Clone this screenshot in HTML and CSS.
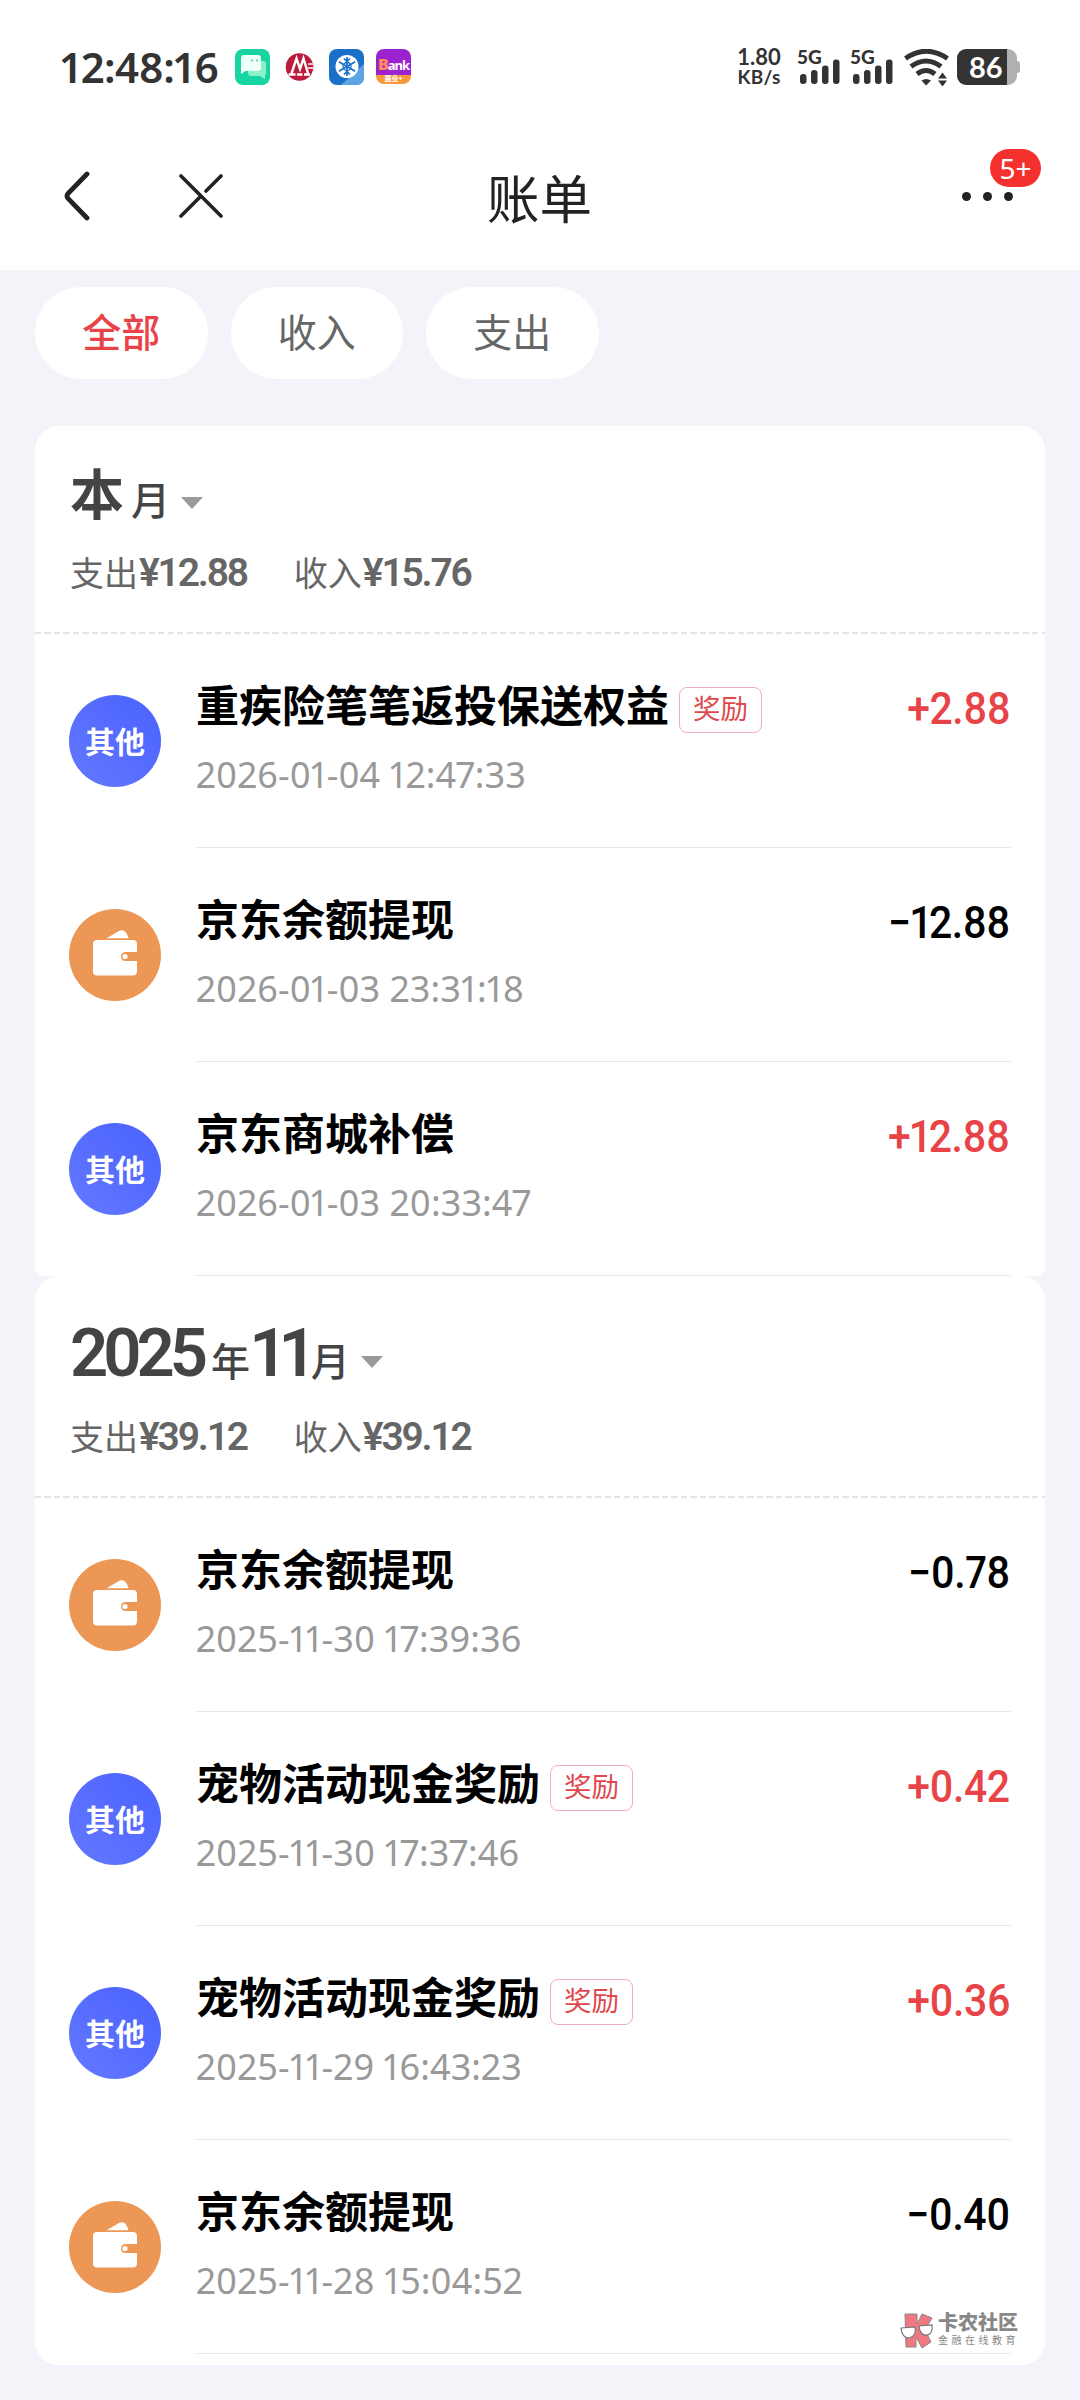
FILE: index.html
```html
<!DOCTYPE html>
<html lang="zh-CN">
<head>
<meta charset="utf-8">
<title>账单</title>
<link rel="stylesheet" href="styles.css">
</head>
<body>
<svg class="defs" aria-hidden="true">
  <defs>
    <symbol id="wallet" viewBox="0 0 92 92">
      <path d="M37.500 29.300L50 22Q53 20.500 56 22.500Q58.500 24.500 59.500 29.300Z" fill="#fff"/>
      <path fill-rule="evenodd" d="M28 31H64Q68 31 68 35V43H57Q52 43 52 47.500T57 52H68V62Q68 66.500 64 66.500H28Q24 66.500 24 62.500V35Q24 31 28 31Z" fill="#fff"/>
      <circle cx="56" cy="47.500" r="2.600" fill="#fff"/>
    </symbol>
    <symbol id="signal" viewBox="0 0 42 26">
      <rect x="0" y="15" width="6.500" height="10" rx="3"/>
      <rect x="11" y="11" width="6.500" height="14" rx="3"/>
      <rect x="22" y="6.500" width="6.500" height="18.500" rx="3"/>
      <rect x="33" y="0.500" width="6.500" height="24.500" rx="3"/>
    </symbol>
  </defs>
</svg>

<header class="top">
  <div class="status">
    <span class="clock">12:48:16</span>
    <div class="apps">
      <svg class="app" viewBox="0 0 35 36"><rect width="35" height="36" rx="8" fill="#17d4a0"/><rect x="13" y="12" width="18" height="15" rx="3" fill="#8df0c8"/><path d="M23 26l7 4v-6z" fill="#8df0c8"/><rect x="6" y="6" width="20" height="16" rx="3" fill="#effffa"/><path d="M6 18v7l6-4z" fill="#effffa"/><path d="M17 10.500v2M22 10.500v2" stroke="#17b48a" stroke-width="1.200"/></svg>
      <svg class="app" viewBox="0 0 35 36"><circle cx="17.500" cy="18" r="13.800" fill="#bd1b3d"/><path d="M6.500 25.500h7M15 25.500h5.500M22 25.500h6M9 26L14.500 9.500L18 20L21.500 9.500L26.500 26" fill="none" stroke="#fff" stroke-width="2.400"/><path d="M26 15h6M26 19h6" stroke="#f3c3cc" stroke-width="2"/></svg>
      <svg class="app" viewBox="0 0 35 36"><rect width="35" height="36" rx="8" fill="#1a6fc9"/><path d="M12 36L35 15v13q0 8-8 8z" fill="#5ca4e4"/><circle cx="18" cy="17.500" r="11.500" fill="#fff"/><path d="M18 8v19M9.800 12.800l16.400 9.400M9.800 22.200l16.400-9.400M15 9.500l3 3 3-3M15 25.500l3-3 3 3" stroke="#1a6fc9" stroke-width="1.700" fill="none"/><circle cx="18" cy="17.500" r="4" fill="none" stroke="#1a6fc9" stroke-width="1.300"/></svg>
      <div class="bank"><b>B</b>ank<i>展业+</i></div>
    </div>
    <div class="speed"><span>1.80</span><span class="kb">KB/s</span></div>
    <div class="cell"><span>5G</span><svg class="bars"><use href="#signal"/></svg></div>
    <div class="cell"><span>5G</span><svg class="bars"><use href="#signal"/></svg></div>
    <svg class="wifi" viewBox="0 0 46 37"><g fill="none" stroke="#333" stroke-width="5" stroke-linecap="butt"><path d="M1.500 9.500Q22 -5 43.500 9.500"/><path d="M7 17.500Q22 6.500 37 17.500"/><path d="M13 25Q22 18 31 25"/></g><path d="M17.500 31.500q4.500-3 9.500 0l-5 5z" fill="#333"/><path d="M34 29.500l4.500-6 4.500 6zM34 31.500l4.500 6 4.500-6z" fill="#333"/></svg>
    <div class="battery"><span class="level">86</span></div>
  </div>
  <nav class="nav">
    <svg class="back" viewBox="0 0 28 52"><path d="M24 4L5 23.500Q3 26 5 28.500L24 48" fill="none" stroke="#222" stroke-width="4.800" stroke-linecap="round"/></svg>
    <svg class="close" viewBox="0 0 44 46"><path d="M2 3L42 43M2 43L21 24M27 18L42 3" fill="none" stroke="#222" stroke-width="3.600" stroke-linecap="round"/></svg>
    <h1 class="title">账单</h1>
    <div class="more"><i></i><i></i><i></i><span class="count">5+</span></div>
  </nav>
</header>

<div class="tabs">
  <span class="tab active">全部</span><span class="tab">收入</span><span class="tab">支出</span>
</div>

<main>
  <section class="card first">
    <div class="head">
      <div class="month"><b class="zh">本</b><span class="unit">月</span><i class="caret"></i></div>
      <div class="sums"><span>支出<b>¥12.88</b></span><span>收入<b>¥15.76</b></span></div>
    </div>
    <div class="row"><div class="icon other">其他</div><div class="body"><div class="line"><span class="name">重疾险笔笔返投保送权益</span><span class="tag">奖励</span><span class="amount in">+2.88</span></div><div class="date">2026-01-04 12:47:33</div></div></div>
    <div class="row"><div class="icon cash"><svg><use href="#wallet"/></svg></div><div class="body"><div class="line"><span class="name">京东余额提现</span><span class="amount">−12.88</span></div><div class="date">2026-01-03 23:31:18</div></div></div>
    <div class="row"><div class="icon other">其他</div><div class="body"><div class="line"><span class="name">京东商城补偿</span><span class="amount in">+12.88</span></div><div class="date">2026-01-03 20:33:47</div></div></div>
  </section>
  <section class="card last">
    <div class="head">
      <div class="month"><b class="num">2025</b><span class="unit">年</span><b class="num">11</b><span class="unit">月</span><i class="caret"></i></div>
      <div class="sums"><span>支出<b>¥39.12</b></span><span>收入<b>¥39.12</b></span></div>
    </div>
    <div class="row"><div class="icon cash"><svg><use href="#wallet"/></svg></div><div class="body"><div class="line"><span class="name">京东余额提现</span><span class="amount">−0.78</span></div><div class="date">2025-11-30 17:39:36</div></div></div>
    <div class="row"><div class="icon other">其他</div><div class="body"><div class="line"><span class="name">宠物活动现金奖励</span><span class="tag">奖励</span><span class="amount in">+0.42</span></div><div class="date">2025-11-30 17:37:46</div></div></div>
    <div class="row"><div class="icon other">其他</div><div class="body"><div class="line"><span class="name">宠物活动现金奖励</span><span class="tag">奖励</span><span class="amount in">+0.36</span></div><div class="date">2025-11-29 16:43:23</div></div></div>
    <div class="row"><div class="icon cash"><svg><use href="#wallet"/></svg></div><div class="body"><div class="line"><span class="name">京东余额提现</span><span class="amount">−0.40</span></div><div class="date">2025-11-28 15:04:52</div></div></div>
    <div class="brand">
      <svg viewBox="0 0 34 36"><path d="M5 1h12v10l5-10 10 4-7 12 6 12-9 6-6-11v10H6z" fill="#f07880" stroke="#888" stroke-width="1"/><path d="M1 15l14-1q2 9-6 11-7 0-8-10zM19 13l13-1q1 9-5 10-7 1-8-9z" fill="#fff" stroke="#777" stroke-width="1.200"/></svg>
      <div><strong>卡农社区</strong><small>金融在线教育</small></div>
    </div>
  </section>
</main>
</body>
</html>
```
FILE: styles.css
```css
* { box-sizing: border-box; }
body {
  margin: 0;
  width: 1080px;
  height: 2400px;
  overflow: hidden;
  background: #f3f3f9;
  font-family: "Noto Sans", "Noto Sans CJK SC", sans-serif;
  color: #222;
}
i { font-style: normal; }
.defs { position: absolute; width: 0; height: 0; }

.top { height: 270px; background: #fff; }
.status { height: 134px; padding: 0 63px 0 61px; display: flex; align-items: center; color: #333; }
.clock { width: 174px; font-size: 42px; font-weight: 600; letter-spacing: -0.5px; line-height: 38px; white-space: nowrap; font-variant-numeric: proportional-nums; }
.apps { display: flex; gap: 12px; }
.app { width: 35px; height: 36px; display: block; }
.bank { width: 35px; height: 35px; border-radius: 8px; background: linear-gradient(#9c22cf 74%, #f59a3c 74%); color: #fff; font-size: 13px; font-weight: 700; line-height: 30px; text-align: center; letter-spacing: -1px; position: relative; }
.bank b { color: #ff8a5c; font-size: 16px; }
.bank i { position: absolute; left: 0; right: 0; bottom: 1px; font-size: 7px; line-height: 8px; letter-spacing: 0; }
.speed { margin-left: auto; width: 46px; display: flex; flex-direction: column; align-items: center; font-family: Lato, sans-serif; font-size: 22px; font-weight: 700; line-height: 20px; white-space: nowrap; }
.kb { font-size: 19px; letter-spacing: 0.3px; }
.cell { width: 42px; height: 36px; margin-left: 11px; display: flex; flex-direction: column; font-family: Lato, sans-serif; font-size: 19px; font-weight: 900; line-height: 15px; }
.speed + .cell { margin-left: 15px; }
.bars { width: 42px; height: 26px; margin-top: -5px; margin-left: 3px; fill: #333; flex: none; }
.wifi { width: 46px; height: 37px; margin-left: 12px; }
.battery { width: 60px; height: 36px; margin-left: 7px; border-radius: 9px; background: linear-gradient(90deg, #333 50px, #b0b0b0 50px); position: relative; }
.battery::after { content: ""; position: absolute; right: -3px; top: 12px; width: 3px; height: 12px; border-radius: 0 3px 3px 0; background: #b0b0b0; }
.level { display: block; padding-left: 12px; color: #fff; font-family: Lato, sans-serif; font-size: 29px; font-weight: 700; line-height: 35px; }

.nav { height: 124px; padding: 0 60px; display: flex; align-items: center; }
.back { width: 28px; height: 52px; margin-left: 3px; }
.close { width: 44px; height: 46px; margin-left: 88px; }
.title { margin: 0 0 0 264px; font-family: "Noto Sans CJK SC", sans-serif; font-size: 52.5px; font-weight: 400; line-height: 60px; }
.more { position: relative; margin-left: auto; margin-right: 7px; display: flex; gap: 12px; }
.more i { width: 9px; height: 9px; border-radius: 50%; background: #222; }
.count { position: absolute; left: 28px; top: -43px; width: 51px; height: 38px; border-radius: 19px; background: #f5312f; color: #fff; font-size: 28px; line-height: 38px; text-align: center; }

.tabs { display: flex; gap: 23px; padding: 17px 35px 47px; }
.tab { width: 172.5px; height: 92px; border-radius: 46px; background: #fff; color: #666; font-size: 39px; line-height: 90px; text-align: center; }
.tab.active { color: #e84347; font-weight: 500; }

main { padding: 0 35px; }
.card { background: #fff; border-radius: 24px; }
.first { height: 850px; border-radius: 24px 24px 8px 8px; }
.last { height: 1089px; position: relative; }
.head { height: 208px; padding: 35px 35px 0; background: repeating-linear-gradient(90deg, #e4e4e4 0 6px, transparent 6px 9.500px) left bottom / 100% 2px no-repeat; }
.last .head { height: 222px; padding-top: 44px; }
.month { height: 66px; display: flex; align-items: baseline; color: #444; line-height: 66px; }
.zh { font-size: 54px; font-weight: 700; margin-right: 7px; }
.num { font-family: Roboto, sans-serif; font-size: 67px; font-weight: 600; letter-spacing: -5px; margin-right: 8px; }
.unit { font-size: 39px; font-weight: 500; }
.unit + .num { letter-spacing: -9px; margin-right: 3px; margin-left: -1px; }
.caret { border: 11px solid transparent; border-top: 12px solid #999; border-bottom: 0; margin: 17px 0 0 11px; align-self: center; }
.sums { display: flex; gap: 47px; margin-top: 21px; font-size: 34px; line-height: 50px; color: #666; }
.last .sums { margin-top: 26px; }
.sums b { font-family: Roboto, sans-serif; font-size: 39px; font-weight: 600; letter-spacing: -2.200px; margin-left: 1px; }
.row { height: 214px; padding: 0 34px; display: flex; }
.icon { width: 92px; height: 92px; margin-top: 61px; border-radius: 50%; flex: none; }
.icon svg { display: block; width: 92px; height: 92px; }
.other { background: linear-gradient(45deg, #6478ff, #4a62ff); color: #fff; font-size: 30px; font-weight: 700; line-height: 94px; text-align: center; }
.cash { background: #ec9755; }
.body { flex: 1; margin-left: 35px; padding-top: 43px; border-bottom: 1px solid #e8e8e8; }
.line { display: flex; height: 64px; align-items: center; }
.name { font-size: 43px; font-weight: 700; line-height: 60px; margin-top: -6px; color: #000; }
.tag { height: 46px; margin: 1px 0 0 10px; padding: 0 13px; border: 1px solid #eeb0b8; border-radius: 8px; color: #e0484e; font-size: 27.5px; line-height: 41px; }
.amount { margin: -1px 1px 0 auto; font-family: Roboto, sans-serif; font-size: 45px; font-weight: 500; letter-spacing: -0.5px; color: #000; transform: scaleX(0.91); transform-origin: right; font-variant-numeric: proportional-nums; }
.amount.in { color: #e84347; }
.date { margin-top: 10px; font-size: 36px; line-height: 48px; color: #999; letter-spacing: 0.1px; font-variant-numeric: proportional-nums; }
.brand { position: absolute; left: 865px; top: 1037px; display: flex; gap: 4px; color: #888; }
.brand svg { width: 34px; height: 36px; }
.brand strong { display: block; font-size: 20px; line-height: 20px; font-weight: 900; }
.brand small { display: block; font-size: 10px; line-height: 14px; letter-spacing: 3.500px; white-space: nowrap; }
```
